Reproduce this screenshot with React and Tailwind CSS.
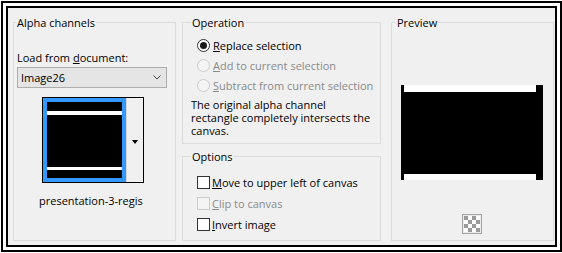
import React from "react";

// Small win32-like controls for the dialog
function Radio({ checked, disabled, children }) {
  return (
    <div className="flex h-[20px] items-center pl-[14px]">
      <span
        className={`flex h-[13px] w-[13px] items-center justify-center rounded-full border ${
          disabled ? "border-[#cccccc] bg-[#f4f4f4]" : "border-[#333333] bg-white"
        }`}
      >
        {checked && <span className="h-[7px] w-[7px] rounded-full bg-[#1a1a1a]" />}
      </span>
      <span className={`ml-[3px] ${disabled ? "text-[#8a8a8a]" : "text-black"}`}>{children}</span>
    </div>
  );
}

function Check({ disabled, children }) {
  return (
    <div className="flex h-[21px] items-center pl-[14px]">
      <span
        className={`h-[13px] w-[13px] border ${
          disabled ? "border-[#cccccc] bg-[#f4f4f4]" : "border-[#333333] bg-white"
        }`}
      />
      <span className={`ml-[2px] ${disabled ? "text-[#8a8a8a]" : "text-black"}`}>{children}</span>
    </div>
  );
}

function Checker() {
  const cells = Array.from({ length: 16 });
  return (
    <div className="h-[20px] w-[20px] border border-[#a6a6a6] bg-[#e9e9e9] p-px">
      <div className="grid grid-cols-4">
        {cells.map((_, i) => {
          const dark = (Math.floor(i / 4) + i) % 2 === 0;
          return <div key={i} className={`h-[4px] w-[4px] ${dark ? "bg-[#9a9a9a]" : "bg-white"}`} />;
        })}
      </div>
    </div>
  );
}

export default function App() {
  return (
    <div className="h-[253px] w-[562px] bg-white pl-px pt-px font-['Open_Sans',sans-serif] text-[11px] leading-[15px] text-black">
      {/* double frame */}
      <div className="flex h-[251px] w-[561px] border-2 border-black bg-white p-[3px]">
        <div className="flex flex-1 border-2 border-black bg-[#f0f0f0] pl-[5px] pt-[7px]">
          {/* Alpha channels */}
          <fieldset className="h-[226px] w-[163px] border border-[#dcdcdc]">
            <legend className="ml-[2px] px-px">Alpha channels</legend>
            <div className="flex flex-col">
              <div className="mt-[20px] pl-[3px]">
                Load from <u>d</u>ocument:
              </div>
              <div className="ml-[3px] mt-[2px] flex h-[21px] w-[150px] items-center justify-between border border-[#adadad] bg-[#e5e5e5] pl-[3px] pr-[5px]">
                <span>Image26</span>
                <svg width="8" height="5" viewBox="0 0 8 5">
                  <polyline points="0.5,0.5 4,4 7.5,0.5" fill="none" stroke="#444" strokeWidth="1" />
                </svg>
              </div>
              <div className="ml-[28px] mt-[9px] flex h-[86px] w-[102px] border border-black">
                <div className="h-[84px] w-[83px] bg-[#3399ff] p-[4px]">
                  <div className="flex h-full flex-col bg-black pb-[8px] pt-[9px]">
                    <div className="h-[4px] bg-white" />
                    <div className="flex-1" />
                    <div className="h-[3px] bg-white" />
                  </div>
                </div>
                <div className="flex flex-1 items-center justify-center border-l border-[#d4d4d4] bg-[#f0f0f0] pt-[3px]">
                  <div className="h-0 w-0 border-l-[3px] border-r-[3px] border-t-[4px] border-l-transparent border-r-transparent border-t-black" />
                </div>
              </div>
              <div className="mt-[10px] pl-[25px]">presentation-3-regis</div>
            </div>
          </fieldset>

          {/* Operation / Options */}
          <div className="ml-[6px] flex w-[199px] flex-col">
            <fieldset className="h-[129px] border border-[#dcdcdc]">
              <legend className="ml-[8px] px-px">Operation</legend>
              <div className="mt-[5px]">
                <Radio checked>
                  <u>R</u>eplace selection
                </Radio>
                <Radio disabled>
                  <u>A</u>dd to current selection
                </Radio>
                <Radio disabled>
                  <u>S</u>ubtract from current selection
                </Radio>
              </div>
              <p className="ml-[8px] mt-[3px] leading-[13px]">
                The original alpha channel
                <br />
                rectangle completely intersects the
                <br />
                canvas.
              </p>
            </fieldset>
            <fieldset className="mt-[5px] h-[92px] border border-[#dcdcdc]">
              <legend className="ml-[8px] px-px">Options</legend>
              <div className="mt-[8px]">
                <Check>
                  <u>M</u>ove to upper left of canvas
                </Check>
                <Check disabled>
                  <u>C</u>lip to canvas
                </Check>
                <Check>
                  <u>I</u>nvert image
                </Check>
              </div>
            </fieldset>
          </div>

          {/* Preview */}
          <fieldset className="ml-[10px] h-[226px] w-[163px] border border-[#dcdcdc]">
            <legend className="ml-[4px] px-px">Preview</legend>
            <div className="ml-[9px] mt-[55px] flex h-[95px] w-[142px] flex-col bg-black">
              <div className="ml-[3px] h-[7px] w-[132px] bg-white" />
              <div className="flex-1" />
              <div className="ml-[3px] h-[6px] w-[132px] bg-white" />
            </div>
            <div className="ml-[70px] mt-[34px]">
              <Checker />
            </div>
          </fieldset>
        </div>
      </div>
    </div>
  );
}
